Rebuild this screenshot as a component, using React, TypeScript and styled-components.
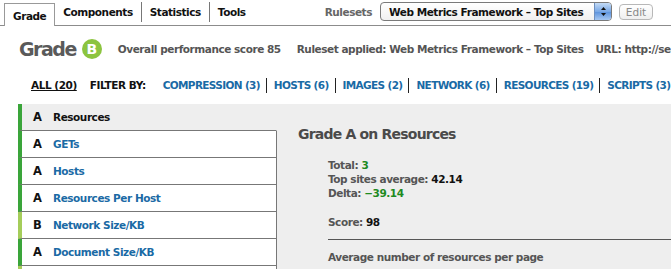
import React from "react";
import styled, { createGlobalStyle } from "styled-components";

const Global = createGlobalStyle`
  html, body { margin: 0; padding: 0; background: #fff; }
  body {
    font-family: "DejaVu Sans", Verdana, sans-serif;
    font-weight: bold;
    font-size: 10.5px;
    letter-spacing: -0.45px;
    overflow: hidden;
  }
`;

const Page = styled.div`
  width: 671px;
  height: 269px;
  overflow: hidden;
`;

const TabBar = styled.div`
  display: flex;
  align-items: flex-end;
  height: 26px;
  border-bottom: 1px solid #8c8c8c;
  padding-left: 4px;
  box-sizing: border-box;
`;

const Tab = styled.div<{ $active?: boolean; $sep?: boolean }>`
  height: ${(p) => (p.$active ? "23px" : "20px")};
  box-sizing: border-box;
  padding: 0 8px;
  display: flex;
  align-items: center;
  color: #111;
  white-space: nowrap;
  margin-bottom: ${(p) => (p.$active ? "-1px" : "3px")};
  background: #fff;
  border: ${(p) => (p.$active ? "1px solid #999" : "none")};
  border-bottom: none;
  border-right: ${(p) => (p.$active ? "1px solid #999" : p.$sep ? "1px solid #777" : "none")};
  padding-top: ${(p) => (p.$active ? "2px" : "0")};
`;

const RightTools = styled.div`
  margin-left: auto;
  display: flex;
  align-items: center;
  height: 26px;
  padding-right: 18px;
  padding-bottom: 1px;
  box-sizing: border-box;
  gap: 7px;
`;

const Label = styled.span`
  color: #666;
  margin-right: 1px;
`;

const Select = styled.div`
  width: 232px;
  height: 19px;
  box-sizing: border-box;
  border: 1px solid #7a7a7a;
  border-radius: 4px;
  background: linear-gradient(#fff, #f0f0f0);
  display: flex;
  align-items: center;
  justify-content: space-between;
  padding-left: 8px;
  overflow: hidden;
  color: #111;
  white-space: nowrap;
`;

const Stepper = styled.div`
  width: 16px;
  height: 17px;
  flex-shrink: 0;
  background: linear-gradient(#c4dbf6, #79a8e6 50%, #5f95de 55%, #a6c7f2);
  border-left: 1px solid #6d8fbf;
  display: flex;
  align-items: center;
  justify-content: center;
`;

const EditButton = styled.div`
  width: 34px;
  height: 16px;
  box-sizing: border-box;
  border: 1px solid #b8b8b8;
  border-radius: 4px;
  background: linear-gradient(#fff, #efefef);
  color: #888;
  font-weight: normal;
  letter-spacing: 0;
  display: flex;
  align-items: center;
  justify-content: center;
`;

const Header = styled.div`
  display: flex;
  align-items: center;
  height: 46px;
  padding-left: 19px;
  color: #555;
  white-space: nowrap;
`;

const Title = styled.span`
  font-size: 19px;
  letter-spacing: -1.5px;
  color: #5a5a5a;
  margin-right: 6px;
  flex-shrink: 0;
`;

const Badge = styled.span`
  width: 20px;
  height: 20px;
  flex-shrink: 0;
  border-radius: 50%;
  background: #8cc43f;
  color: #fff;
  font-size: 14px;
  letter-spacing: 0;
  display: inline-flex;
  align-items: center;
  justify-content: center;
  margin-right: 16px;
`;

const Meta = styled.span<{ $gap?: number }>`
  color: #555;
  flex-shrink: 0;
  margin-right: ${(p) => p.$gap ?? 0}px;
`;

const FilterRow = styled.div`
  display: flex;
  align-items: center;
  height: 32px;
  padding-left: 31px;
  padding-bottom: 6px;
  box-sizing: border-box;
  white-space: nowrap;
`;

const All = styled.span`
  color: #111;
  text-decoration: underline;
  margin-right: 13px;
`;

const FilterLabel = styled.span`
  color: #111;
  margin-right: 17px;
`;

const FilterLink = styled.span<{ $last?: boolean }>`
  color: #1a6aa5;
  letter-spacing: -0.65px;
  padding-right: 6px;
  margin-right: 7px;
  border-right: ${(p) => (p.$last ? "none" : "1px solid #222")};
  line-height: 15px;
  flex-shrink: 0;
`;

const Main = styled.div`
  margin-left: 18px;
  background: #eeeeee;
  display: flex;
  height: 170px;
`;

const List = styled.div`
  width: 259px;
  display: flex;
  flex-direction: column;
`;

const Row = styled.div<{ $color: string; $selected?: boolean }>`
  height: 27px;
  box-sizing: border-box;
  display: flex;
  align-items: center;
  border-left: 4px solid ${(p) => p.$color};
  background: ${(p) => (p.$selected ? "transparent" : "#fff")};
  border-right: ${(p) => (p.$selected ? "1px solid transparent" : "1px solid #777")};
  border-bottom: 1px solid #777;
  flex-shrink: 0;
`;

const Letter = styled.span`
  width: 20px;
  margin-left: 11px;
  color: #111;
  font-size: 11.5px;
  letter-spacing: 0;
`;

const Name = styled.span<{ $selected?: boolean }>`
  color: ${(p) => (p.$selected ? "#111" : "#1a6aa5")};
`;

const Detail = styled.div`
  flex: 1;
  padding-left: 21px;
  color: #555;
`;

const DetailTitle = styled.div`
  font-size: 14px;
  letter-spacing: -0.8px;
  color: #4a4a4a;
  margin-top: 22px;
  margin-bottom: 16px;
`;

const Stats = styled.div`
  padding-left: 30px;
  line-height: 14px;
`;

const Spacer = styled.div`
  height: 15px;
`;

const Value = styled.span<{ $green?: boolean }>`
  color: ${(p) => (p.$green ? "#1f8a1f" : "#111")};
`;

const Divider = styled.div`
  height: 1px;
  background: #555;
  margin: 10px 0 10px 30px;
`;

const rows: { g: string; name: string; color: string; selected?: boolean }[] = [
  { g: "A", name: "Resources", color: "#3aa53a", selected: true },
  { g: "A", name: "GETs", color: "#3aa53a" },
  { g: "A", name: "Hosts", color: "#3aa53a" },
  { g: "A", name: "Resources Per Host", color: "#3aa53a" },
  { g: "B", name: "Network Size/KB", color: "#a5cd5a" },
  { g: "A", name: "Document Size/KB", color: "#3aa53a" },
  { g: "B", name: "", color: "#a5cd5a" },
];

const filters = ["COMPRESSION (3)", "HOSTS (6)", "IMAGES (2)", "NETWORK (6)", "RESOURCES (19)", "SCRIPTS (3)"];

export default function App() {
  return (
    <Page>
      <Global />
      <TabBar>
        <Tab $active>Grade</Tab>
        <Tab $sep>Components</Tab>
        <Tab $sep>Statistics</Tab>
        <Tab>Tools</Tab>
        <RightTools>
          <Label>Rulesets</Label>
          <Select>
            <span>Web Metrics Framework – Top Sites</span>
            <Stepper>
              <svg width="7" height="11" viewBox="0 0 7 11">
                <path d="M3.5 1 L6 4 L1 4 Z" fill="#111" />
                <path d="M3.5 10 L6 7 L1 7 Z" fill="#111" />
              </svg>
            </Stepper>
          </Select>
          <EditButton>Edit</EditButton>
        </RightTools>
      </TabBar>
      <Header>
        <Title>Grade</Title>
        <Badge>B</Badge>
        <Meta $gap={16}>Overall performance score 85</Meta>
        <Meta $gap={12}>Ruleset applied: Web Metrics Framework – Top Sites</Meta>
        <Meta>URL: http://search.example.com/</Meta>
      </Header>
      <FilterRow>
        <All>ALL (20)</All>
        <FilterLabel>FILTER BY:</FilterLabel>
        {filters.map((f, i) => (
          <FilterLink key={f} $last={i === filters.length - 1}>
            {f}
          </FilterLink>
        ))}
      </FilterRow>
      <Main>
        <List>
          {rows.map((r, i) => (
            <Row key={i} $color={r.color} $selected={r.selected}>
              <Letter>{r.g}</Letter>
              <Name $selected={r.selected}>{r.name}</Name>
            </Row>
          ))}
        </List>
        <Detail>
          <DetailTitle>Grade A on Resources</DetailTitle>
          <Stats>
            <div>
              Total: <Value $green>3</Value>
            </div>
            <div>
              Top sites average: <Value>42.14</Value>
            </div>
            <div>
              Delta: <Value $green>−39.14</Value>
            </div>
            <Spacer />
            <div>
              Score: <Value>98</Value>
            </div>
          </Stats>
          <Divider />
          <Stats>Average number of resources per page</Stats>
        </Detail>
      </Main>
    </Page>
  );
}
